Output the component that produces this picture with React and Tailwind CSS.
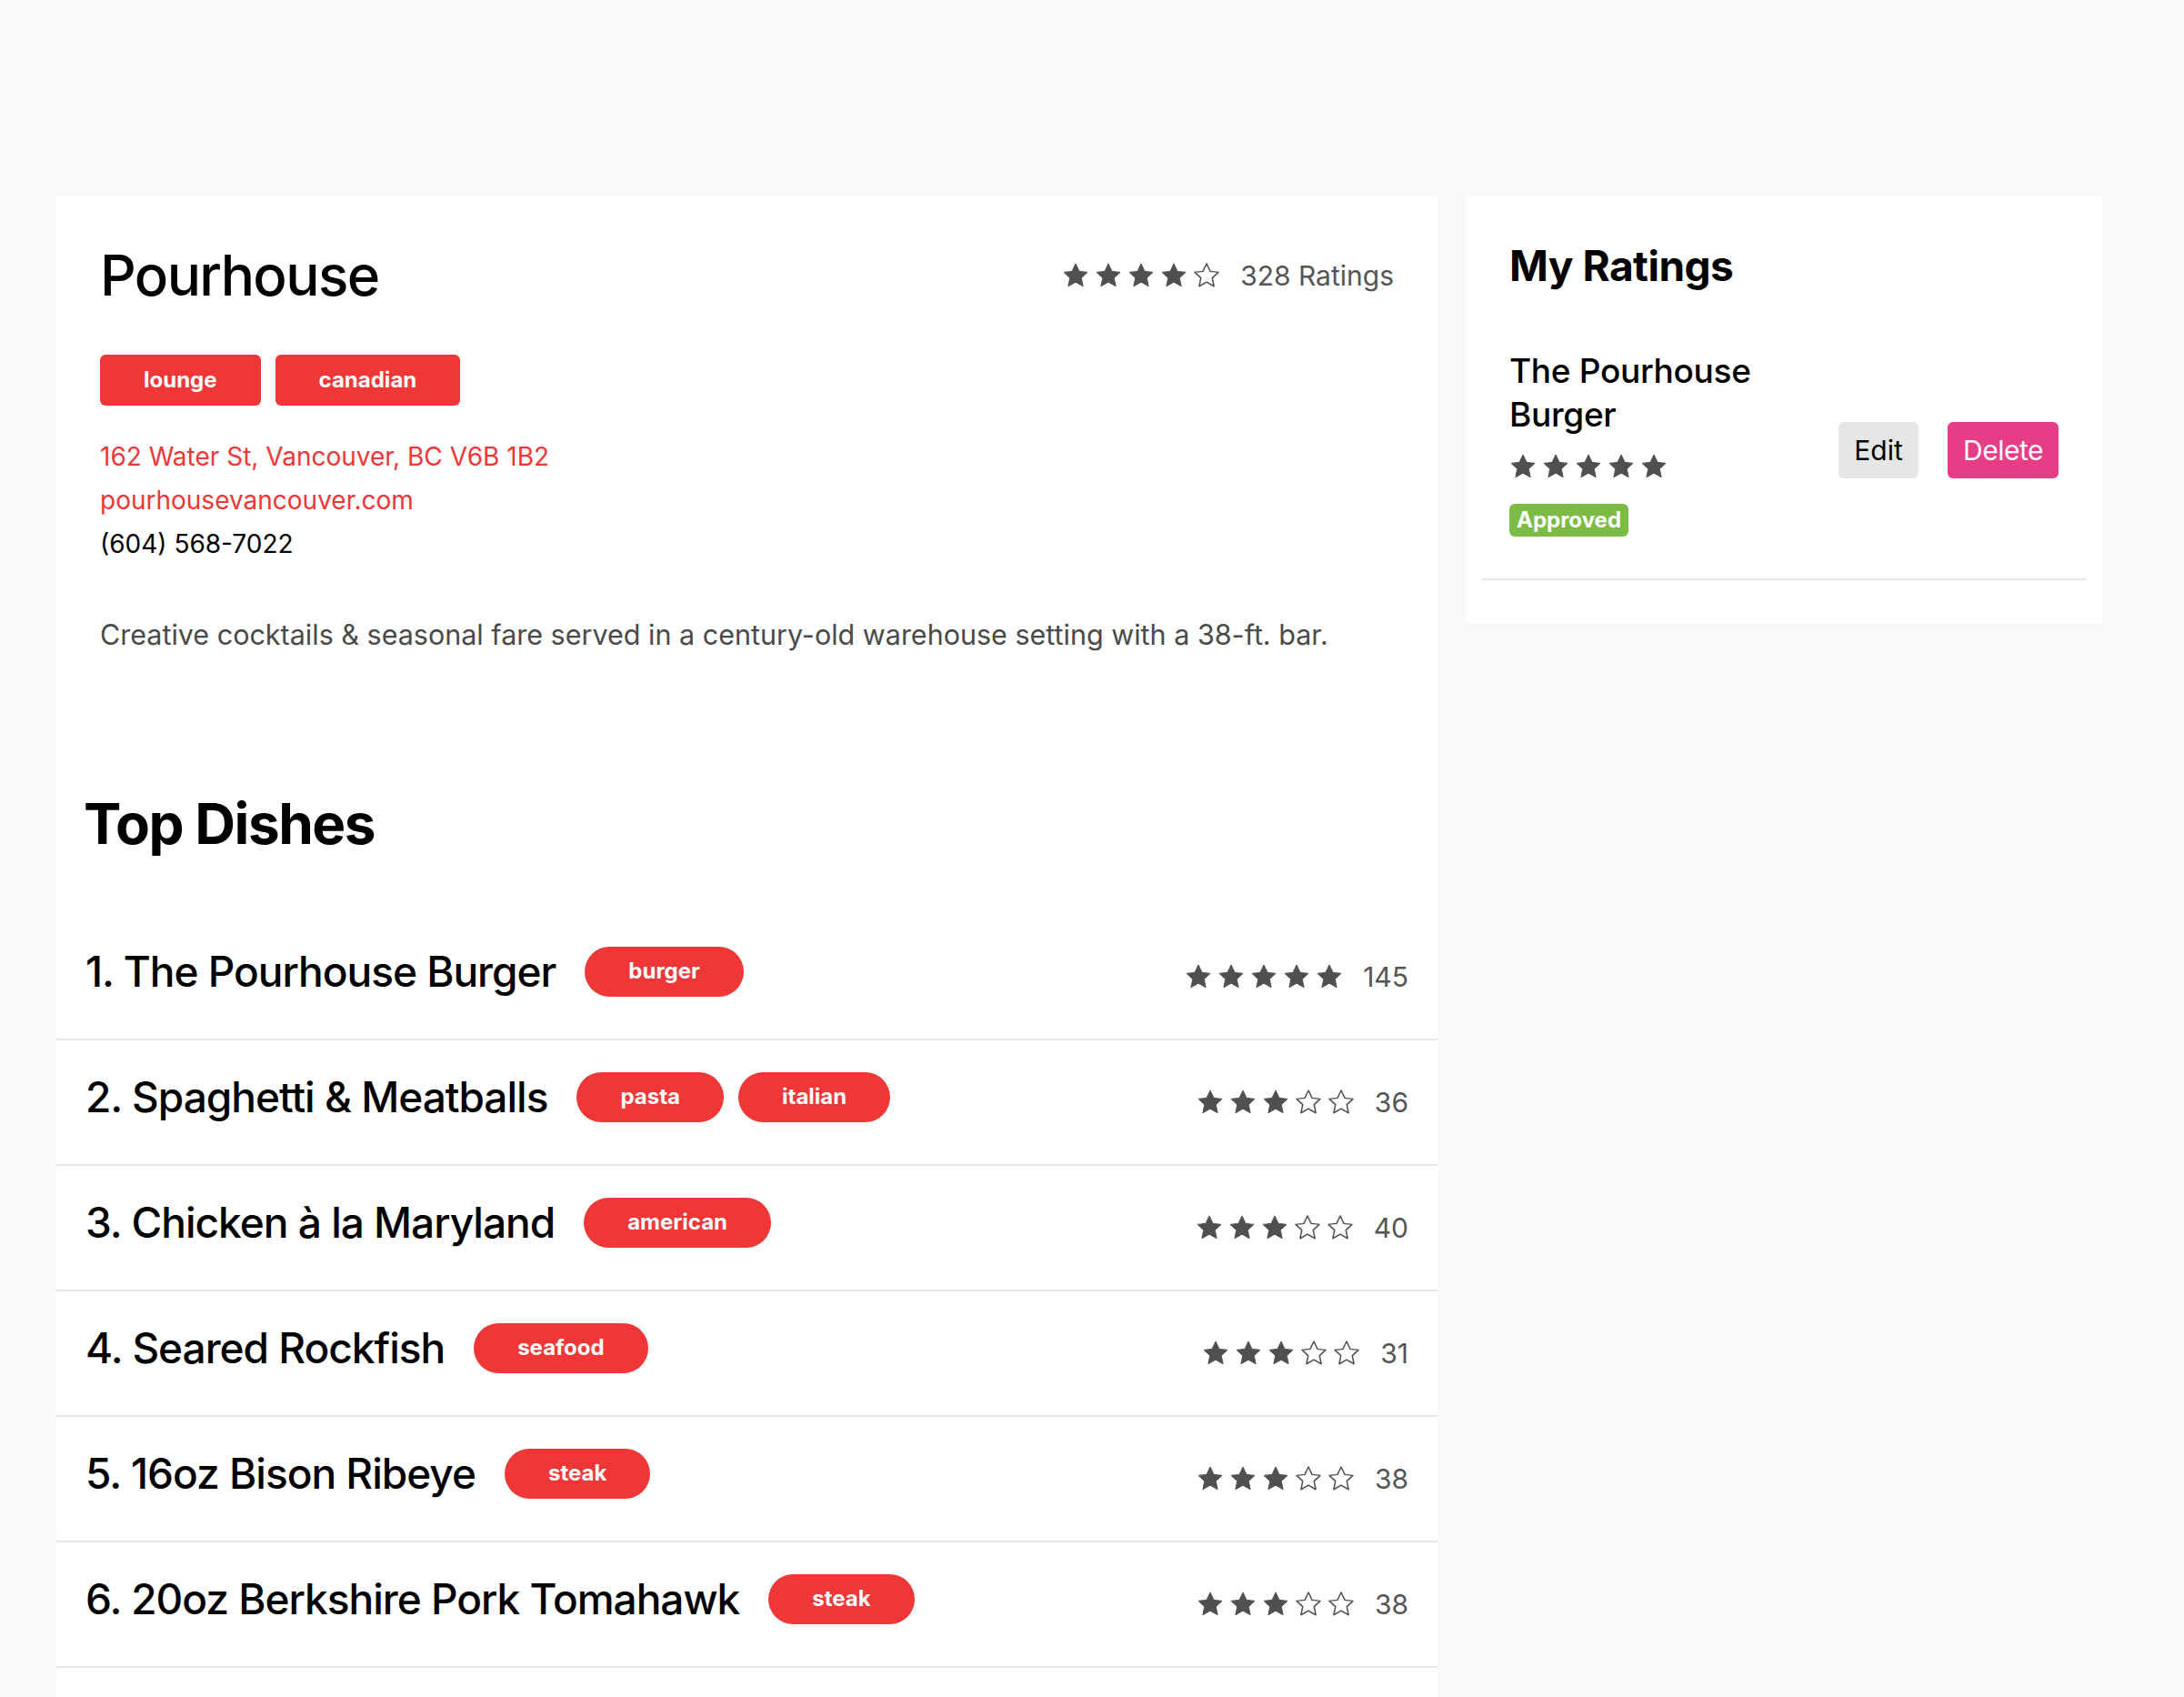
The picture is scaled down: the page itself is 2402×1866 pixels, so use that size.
import React from 'react';

const dishes = [
    { name: '1. The Pourhouse Burger', tags: ['burger'], stars: 5, count: 145 },
    { name: '2. Spaghetti & Meatballs', tags: ['pasta', 'italian'], stars: 3, count: 36 },
    { name: '3. Chicken à la Maryland', tags: ['american'], stars: 3, count: 40 },
    { name: '4. Seared Rockfish', tags: ['seafood'], stars: 3, count: 31 },
    { name: '5. 16oz Bison Ribeye', tags: ['steak'], stars: 3, count: 38 },
    { name: '6. 20oz Berkshire Pork Tomahawk', tags: ['steak'], stars: 3, count: 38 },
];

function Star({ filled }) {
    return (
        <svg viewBox="0 0 24 24" className="w-[30px] h-[30px]">
            <polygon
                points="12,1.6 15.2,8.3 22.4,9.1 17,14.1 18.5,21.4 12,17.7 5.5,21.4 7,14.1 1.6,9.1 8.8,8.3"
                fill={filled ? '#505050' : 'none'}
                stroke="#505050"
                strokeWidth={filled ? 0.8 : 1.2}
                strokeLinejoin="round"
            />
        </svg>
    );
}

function Stars({ value }) {
    return (
        <div className="flex items-center gap-[6px]">
            {[1, 2, 3, 4, 5].map((i) => (
                <Star key={i} filled={i <= value} />
            ))}
        </div>
    );
}

function App() {
    return (
        <div className="min-h-screen bg-[#f8f9fa] pt-[216px] pl-[62px] font-['Inter','Helvetica_Neue','Liberation_Sans',sans-serif] text-black">
            <div className="flex items-start gap-[31px]">
                {/* restaurant card */}
                <div className="w-[1519px] bg-white pb-[40px]">
                    <div className="px-12 pt-[49px] pb-[60px]">
                        <div className="flex items-center justify-between">
                            <h1 className="text-[62px] leading-[76px] font-medium tracking-[-1.6px]">Pourhouse</h1>
                            <div className="flex items-center gap-[22px]">
                                <Stars value={4} />
                                <span className="text-[30px] text-[#555]">328 Ratings</span>
                            </div>
                        </div>
                        <div className="flex gap-4 mt-[49px]">
                            <span className="h-[56px] px-12 flex items-center rounded-md bg-[#ef3737] text-white text-[24px] font-bold">lounge</span>
                            <span className="h-[56px] px-12 flex items-center rounded-md bg-[#ef3737] text-white text-[24px] font-bold">canadian</span>
                        </div>
                        <div className="mt-[32px] text-[28px] leading-[48px]">
                            <div className="text-[#ef3737]">162 Water St, Vancouver, BC V6B 1B2</div>
                            <div className="text-[#ef3737]">pourhousevancouver.com</div>
                            <div>(604) 568-7022</div>
                        </div>
                        <p className="mt-[52px] text-[30.5px] leading-[48px] text-[#4a4a4a]">
                            Creative cocktails &amp; seasonal fare served in a century-old warehouse setting with a 38-ft. bar.
                        </p>
                    </div>

                    <div className="pl-[30px] pt-[86px] pb-[62px]">
                        <h2 className="text-[62px] leading-[76px] font-bold tracking-[-1.5px]">Top Dishes</h2>
                    </div>
                    <div>
                        {dishes.map((d) => (
                            <div key={d.name} className="h-[138px] border-b-2 border-[#e6e6e6] px-8 flex items-center justify-between">
                                <div className="flex items-center gap-4 pb-[12px]">
                                    <h3 className="text-[46px] font-medium mr-4 tracking-[-1px]">{d.name}</h3>
                                    {d.tags.map((t) => (
                                        <span key={t} className="h-[55px] px-12 flex items-center rounded-full bg-[#ef3737] text-white text-[24px] font-bold">
                                            {t}
                                        </span>
                                    ))}
                                </div>
                                <div className="flex items-center gap-[22px]">
                                    <Stars value={d.stars} />
                                    <span className="text-[30px] text-[#555]">{d.count}</span>
                                </div>
                            </div>
                        ))}
                    </div>
                </div>

                {/* my ratings card */}
                <div className="w-[700px] bg-white px-[18px] pt-12 pb-[47px]">
                    <h2 className="px-[30px] text-[46px] leading-[56px] font-bold tracking-[-0.5px]">My Ratings</h2>
                    <div className="mt-[64px] px-[30px] pb-[46px] border-b-2 border-[#e6e6e6] flex items-start justify-between">
                        <div className="w-[320px]">
                            <div className="text-[37px] leading-[48px] font-medium tracking-[-0.3px]">The Pourhouse Burger</div>
                            <div className="mt-[18px]">
                                <Stars value={5} />
                            </div>
                            <span className="mt-[26px] inline-block rounded-md bg-[#7cbb46] text-white text-[24px] leading-[36px] font-bold px-[8px]">Approved</span>
                        </div>
                        <div className="flex gap-8 mt-[80px]">
                            <button className="h-[62px] w-[88px] rounded-md bg-[#e5e6e8] text-[30px]">Edit</button>
                            <button className="h-[62px] w-[122px] rounded-md bg-[#e63d87] text-white text-[30px] tracking-[-0.5px]">Delete</button>
                        </div>
                    </div>
                </div>
            </div>
        </div>
    );
}

export default App;
